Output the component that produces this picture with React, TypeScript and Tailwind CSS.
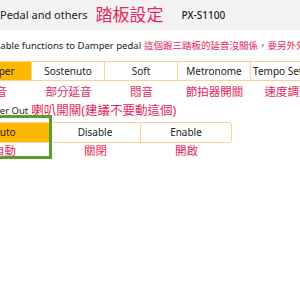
const red = 'text-[#e4285a]'

const pedals = [
  { en: 'Damper', zh: '延音' },
  { en: 'Sostenuto', zh: '部分延音' },
  { en: 'Soft', zh: '悶音' },
  { en: 'Metronome', zh: '節拍器開關' },
  { en: 'Tempo Setting', zh: '速度調整' },
]

const speaker = [
  { en: 'Auto', zh: '自動' },
  { en: 'Disable', zh: '關閉' },
  { en: 'Enable', zh: '開啟' },
]

export default function App() {
  return (
    <div className="w-[300px] h-[300px] overflow-hidden bg-white font-['Noto_Sans','Noto_Sans_CJK_TC',sans-serif] text-[#222]">
      <div className="h-[30px] bg-[#f3f3f4] flex items-center whitespace-nowrap">
        <span className="text-[11px]">Pedal and others</span>
        <span className={`ml-[8px] text-[17px] ${red}`}>踏板設定</span>
        <span className="ml-[18px] text-[10px] font-medium">PX-S1100</span>
      </div>

      <div className="mt-[8px] ml-[-29px] h-[16px] flex items-center whitespace-nowrap text-[9.5px]">
        <span>Assignable functions to Damper pedal</span>
        <span className={`ml-[3px] ${red}`}>這個跟三踏板的延音沒關係，要另外外接</span>
      </div>

      <div className="ml-[-41px] mt-[7px] flex">
        {pedals.map((p, i) => (
          <div key={p.en} className="w-[73px] flex flex-col items-center shrink-0">
            <div
              className={`w-full h-[20px] flex items-center justify-center whitespace-nowrap text-[10px] border-y border-r border-[#f9d49a] ${
                i === 0 ? 'bg-[#ffb800] border-l' : 'bg-white'
              }`}
            >
              {p.en}
            </div>
            <div className={`mt-[3px] text-[11.5px] leading-[16px] whitespace-nowrap ${red}`}>{p.zh}</div>
          </div>
        ))}
      </div>

      <div className="mt-[3px] ml-[-27px] h-[16px] flex items-center whitespace-nowrap text-[9.5px]">
        <span>Speaker Out</span>
        <span className={`ml-[3px] text-[12.5px] ${red}`}>喇叭開關(建議不要動這個)</span>
      </div>

      <div className="ml-[-41px] mt-[3px] relative">
        <div className="flex">
          {speaker.map((s, i) => (
            <div key={s.en} className="w-[91px] flex flex-col items-center shrink-0">
              <div
                className={`w-full h-[21px] flex items-center justify-center text-[10px] border-y border-r border-[#f9d49a] ${
                  i === 0 ? 'bg-[#ffb800] border-l' : 'bg-white'
                } ${i === 2 ? 'rounded-r-[4px] border-[#f7c06a]' : ''}`}
              >
                {s.en}
              </div>
              <div className={`text-[11.5px] leading-[16px] ${red}`}>{s.zh}</div>
            </div>
          ))}
        </div>
        <div className="absolute left-[-10px] top-[-7px] w-[103px] h-[44px] border-[3px] border-[#5a9e2f]" />
      </div>
    </div>
  )
}
